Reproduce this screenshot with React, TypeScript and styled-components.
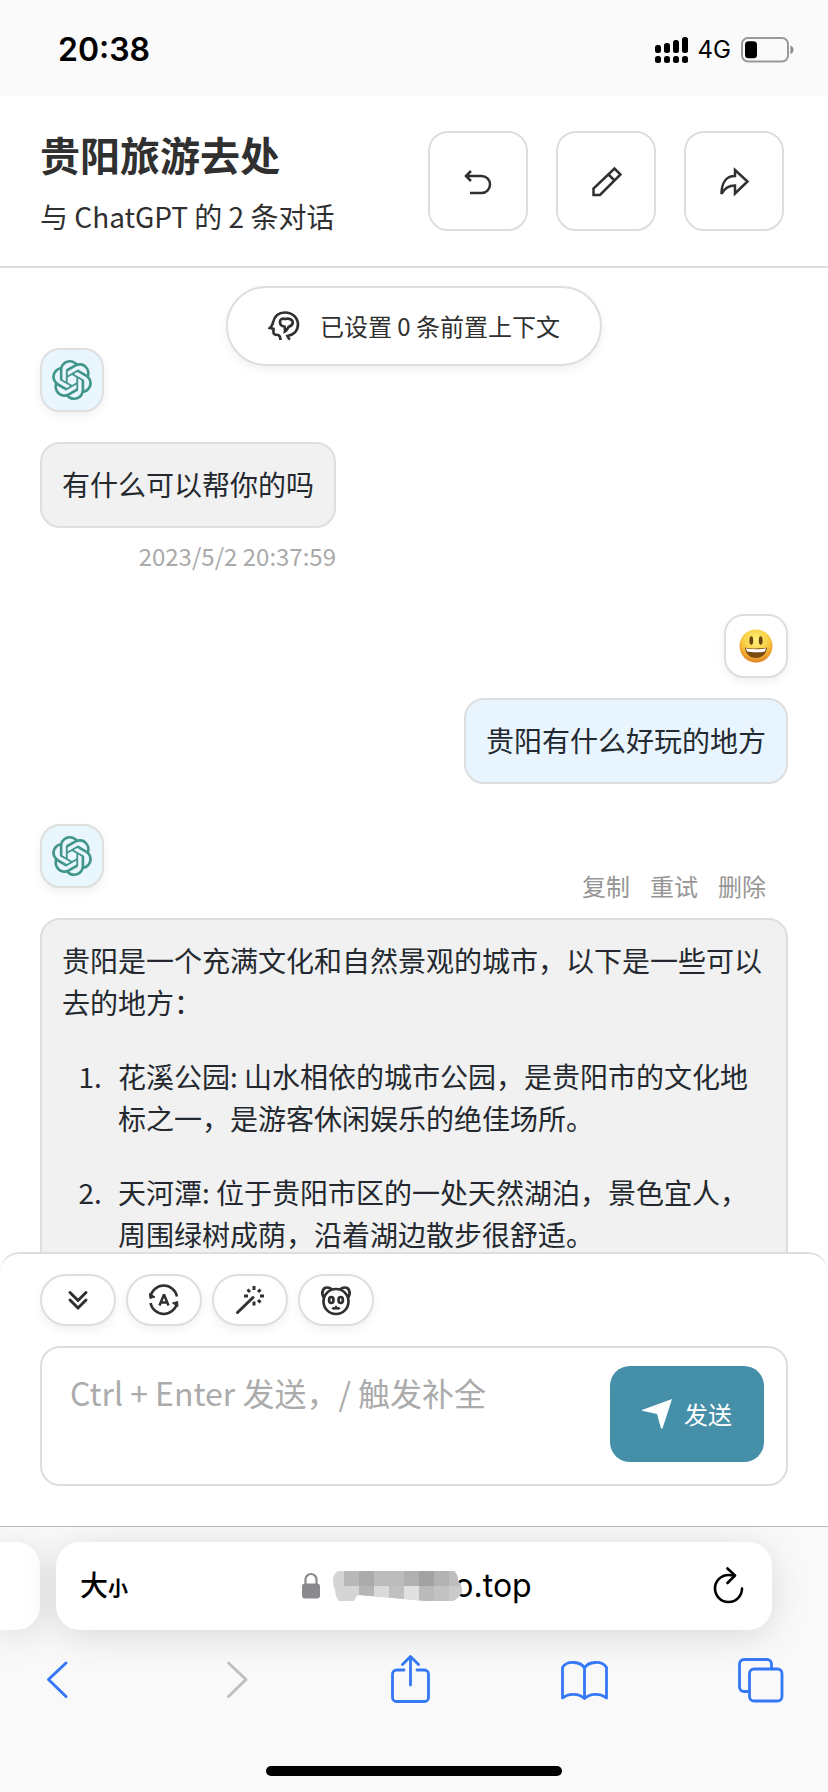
import React from "react";
import styled, { createGlobalStyle } from "styled-components";
import { SiOpenai } from "react-icons/si";

const line = "#dedede";
const ink = "#303030";
const blue = "#3478f6";
const softShadow = "0 4px 10px rgba(0, 0, 0, 0.06)";

const GlobalStyle = createGlobalStyle`
  * { box-sizing: border-box; }
  body {
    margin: 0;
    background: #fff;
    color: ${ink};
    font-family: "Noto Sans CJK SC", sans-serif;
    -webkit-font-smoothing: antialiased;
  }
  button, textarea { font-family: inherit; color: inherit; }
  button { padding: 0; border: 0; background: none; cursor: pointer; }
  svg { display: block; flex: none; }
`;

const Screen = styled.div`
  display: flex;
  flex-direction: column;
  height: 100vh;
  overflow: hidden;
`;

const StatusBar = styled.div`
  flex: none;
  display: flex;
  align-items: center;
  justify-content: space-between;
  height: 96px;
  padding: 4px 34px 0 58px;
  background: #fafafa;
  color: #000;
  font-family: Inter, sans-serif;
`;

const Clock = styled.time`
  font-size: 32px;
  line-height: 40px;
  font-weight: 600;
`;

const StatusIcons = styled.div`
  display: flex;
  align-items: center;
  gap: 10px;
  font-size: 24px;
  line-height: 28px;
`;

const Header = styled.header`
  flex: none;
  display: flex;
  align-items: center;
  justify-content: space-between;
  padding: 29px 44px 29px 40px;
  border-bottom: 2px solid ${line};
`;

const Titles = styled.div`
  display: flex;
  flex-direction: column;
  gap: 16px;
  padding-top: 4px;
`;

const Title = styled.h1`
  margin: 0;
  font-size: 40px;
  line-height: 50px;
  font-weight: 700;
`;

const Subtitle = styled.p`
  margin: 0;
  font-size: 28px;
  line-height: 42px;
`;

const HeaderActions = styled.div`
  display: flex;
  gap: 28px;
`;

const HeaderButton = styled.button`
  display: flex;
  align-items: center;
  justify-content: center;
  width: 100px;
  height: 100px;
  border: 2px solid ${line};
  border-radius: 20px;
`;

const Chat = styled.main`
  position: relative;
  flex: 1;
  min-height: 0;
  display: flex;
  flex-direction: column;
`;

const Messages = styled.div`
  flex: 1;
  min-height: 0;
  overflow: hidden auto;
  scrollbar-width: none;
  display: flex;
  flex-direction: column;
  gap: 40px;
  padding: 80px 40px 0;
`;

const ContextPill = styled.button`
  position: absolute;
  top: 18px;
  left: 50%;
  transform: translateX(-50%);
  display: flex;
  align-items: center;
  gap: 20px;
  height: 80px;
  padding: 0 40px;
  border: 2px solid ${line};
  border-radius: 40px;
  background: #fff;
  box-shadow: ${softShadow};
  font-size: 24px;
  line-height: 36px;
  white-space: nowrap;
`;

const Message = styled.article<{ $user?: boolean }>`
  flex: none;
  display: flex;
  flex-direction: column;
  align-items: ${(p) => (p.$user ? "flex-end" : "flex-start")};
`;

const MessageTop = styled.div<{ $user?: boolean }>`
  display: flex;
  justify-content: space-between;
  align-self: stretch;
  flex-direction: ${(p) => (p.$user ? "row-reverse" : "row")};
  height: ${(p) => (p.$user ? 84 : 94)}px;
`;

const Avatar = styled.div<{ $user?: boolean }>`
  display: flex;
  align-items: center;
  justify-content: center;
  width: 64px;
  height: 64px;
  border: 2px solid ${line};
  border-radius: 20px;
  background: ${(p) => (p.$user ? "#fff" : "#e9f6fe")};
  color: #41958a;
  box-shadow: ${softShadow};
`;

const MessageActions = styled.div`
  align-self: flex-end;
  display: flex;
  gap: 20px;
  padding: 0 22px 14px;
`;

const TextButton = styled.button`
  color: #969696;
  font-size: 24px;
  line-height: 36px;
`;

const BubbleColumn = styled.div`
  display: flex;
  flex-direction: column;
  align-items: flex-end;
  gap: 10px;
`;

const Bubble = styled.div<{ $user?: boolean }>`
  padding: 19px 20px 21px;
  border: 2px solid ${line};
  border-radius: 20px;
  background: ${(p) => (p.$user ? "#e8f5fe" : "#f1f1f2")};
  color: #24292f;
  font-size: 28px;
  line-height: 42px;

  p { margin: 0; }
  ol { margin: 32px 0 0; padding-left: 46px; }
  li { padding-left: 10px; }
  li + li { margin-top: 32px; }
`;

const Stamp = styled.time`
  color: #aaa;
  font-size: 24px;
  line-height: 36px;
`;

const Composer = styled.section`
  flex: none;
  display: flex;
  flex-direction: column;
  gap: 20px;
  padding: 20px 40px 40px;
  border-top: 2px solid ${line};
  border-radius: 20px 20px 0 0;
  background: #fff;
`;

const Tools = styled.div`
  display: flex;
  gap: 10px;
`;

const ToolButton = styled.button`
  display: flex;
  align-items: center;
  justify-content: center;
  width: 76px;
  height: 52px;
  border: 2px solid ${line};
  border-radius: 26px;
  box-shadow: ${softShadow};
`;

const InputBox = styled.form`
  display: flex;
  align-items: flex-start;
  height: 140px;
  padding: 18px 22px 0 28px;
  border: 2px solid ${line};
  border-radius: 20px;
`;

const Input = styled.textarea`
  flex: 1;
  min-width: 0;
  height: 96px;
  padding: 2px 0;
  border: 0;
  outline: 0;
  resize: none;
  background: none;
  font-size: 32px;
  line-height: 48px;

  &::placeholder { color: #ababab; opacity: 1; }
`;

const SendButton = styled.button`
  display: flex;
  align-items: center;
  gap: 12px;
  height: 96px;
  padding: 0 32px;
  border-radius: 20px;
  background: #4590a8;
  color: #fff;
  font-size: 24px;
  line-height: 36px;
`;

const Browser = styled.footer`
  flex: none;
  overflow: hidden;
  padding: 15px 0 16px;
  border-top: 1px solid #b9b9b9;
  background: #f9f9f9;
`;

const AddressRow = styled.div`
  display: flex;
  gap: 16px;
  padding-right: 56px;
`;

const AddressCard = styled.div`
  flex: 1;
  display: grid;
  grid-template-columns: 1fr auto 1fr;
  align-items: center;
  height: 88px;
  padding: 0 28px 0 24px;
  border-radius: 24px;
  background: #fff;
  box-shadow: 0 6px 36px rgba(0, 0, 0, 0.13);
  color: #000;
`;

const PreviousTab = styled.div`
  width: 40px;
  height: 88px;
  border-radius: 0 24px 24px 0;
  background: #fff;
  box-shadow: 0 6px 36px rgba(0, 0, 0, 0.13);
`;

const SizeButton = styled.button`
  justify-self: start;
  font-size: 28px;
  line-height: 40px;
  font-weight: 500;

  small { font-size: 20px; font-weight: 700; }
`;

const Address = styled.button`
  display: flex;
  align-items: center;
  padding-left: 10px;
  font-family: Inter, sans-serif;
  font-size: 32px;
  line-height: 40px;
`;

const Mosaic = styled.svg`
  position: relative;
  z-index: 1;
  margin: 0 -8px 0 13px;
`;

const ReloadButton = styled.button`
  justify-self: end;
`;

const NavBar = styled.nav`
  display: flex;
  align-items: center;
  justify-content: space-between;
  height: 98px;
  padding: 0 44px 0 33px;
  color: ${blue};

  button:disabled { color: #bfbfbf; }
`;

const HomeIndicator = styled.div`
  width: 296px;
  height: 10px;
  margin: 38px auto 0;
  border-radius: 5px;
  background: #000;
`;

type IconProps = { size?: number; width?: number; children: React.ReactNode };

const Icon = ({ size = 32, width = 2.5, children }: IconProps) => (
  <svg
    width={size}
    height={size}
    viewBox={`0 0 ${size} ${size}`}
    fill="none"
    stroke="currentColor"
    strokeWidth={width}
    aria-hidden="true"
  >
    {children}
  </svg>
);

const SignalIcon = () => (
  <svg width="33" height="26" viewBox="0 0 33 26" aria-hidden="true">
    {[8, 6, 3, 0].map((y, i) => (
      <React.Fragment key={y}>
        <rect x={i * 9} y={y} width="6" height={16 - y} rx="2.5" />
        <rect x={i * 9} y="19" width="6" height="7" rx="2.5" />
      </React.Fragment>
    ))}
  </svg>
);

const BatteryIcon = () => (
  <svg width="53" height="26" viewBox="0 0 53 26" aria-hidden="true">
    <rect x="1" y="1" width="46" height="23.5" rx="6" fill="none" stroke="#999" strokeWidth="2" />
    <path d="M49.5 8.5c2 .8 3 2.3 3 4.2s-1 3.4-3 4.2z" fill="#888" />
    <rect x="4" y="4.2" width="12" height="17" rx="3.5" />
  </svg>
);

const SmileIcon = () => (
  <svg width="34" height="34" viewBox="0 0 34 34" aria-hidden="true">
    <defs>
      <radialGradient id="face" cx="50%" cy="32%" r="68%">
        <stop offset="0" stopColor="#fff27a" />
        <stop offset="0.6" stopColor="#f8ca40" />
        <stop offset="1" stopColor="#e08020" />
      </radialGradient>
    </defs>
    <circle cx="17" cy="17" r="16.5" fill="url(#face)" />
    <ellipse cx="12.3" cy="11.5" rx="1.9" ry="4.3" fill="#6b4410" />
    <ellipse cx="21.7" cy="11.5" rx="1.9" ry="4.3" fill="#6b4410" />
    <path d="M6 18.5c3.5 1.3 18.5 1.3 22 0 0 5.5-4.5 10.5-11 10.5S6 24 6 18.5z" fill="#7a4a10" />
    <path d="M7 19.3c4 1.2 16 1.2 20 0-.2 1.5-.6 2.4-1.2 3.2-4 1-13.600 1-17.600 0-.6-.8-1-1.700-1.200-3.200z" fill="#fff" />
  </svg>
);

const mosaicCells: Array<[number, number, number, number, string]> = [
  [11, 0, 15, 15, "#b8b8b8"],
  [26, 0, 15, 15, "#ababab"],
  [41, 0, 30, 15, "#bcbcbc"],
  [71, 0, 15, 15, "#b0b0b0"],
  [86, 0, 15, 15, "#a2a2a2"],
  [101, 0, 15, 15, "#b2b2b2"],
  [116, 0, 13, 15, "#bebebe"],
  [26, 15, 15, 15, "#b5b5b5"],
  [41, 15, 15, 15, "#dadada"],
  [56, 15, 15, 15, "#c0c0c0"],
  [71, 15, 15, 15, "#e0e0e0"],
  [86, 15, 15, 15, "#bababa"],
  [101, 15, 15, 15, "#c2c2c2"],
  [116, 15, 13, 15, "#cacaca"],
];

const MosaicBlock = () => (
  <Mosaic width="129" height="30" viewBox="0 0 129 30" aria-hidden="true">
    <defs>
      <clipPath id="smudge">
        <path d="M5 0H121Q125 3 125 10Q129 14 129 20Q127 27 120 30H92L71 28L26 24Q23 25 21 30H6Q2 26 2 18Q0 16 0 8Q1 2 5 0Z" />
      </clipPath>
    </defs>
    <g clipPath="url(#smudge)">
      <rect width="129" height="30" fill="#d5d5d5" />
      {mosaicCells.map(([x, y, w, h, fill]) => (
        <rect key={`${x}-${y}`} x={x} y={y} width={w} height={h} fill={fill} />
      ))}
    </g>
  </Mosaic>
);

const places = [
  "花溪公园: 山水相依的城市公园，是贵阳市的文化地标之一，是游客休闲娱乐的绝佳场所。",
  "天河潭: 位于贵阳市区的一处天然湖泊，景色宜人，周围绿树成荫，沿着湖边散步很舒适。",
];

export default function App() {
  return (
    <Screen>
      <GlobalStyle />
      <StatusBar>
        <Clock>20:38</Clock>
        <StatusIcons>
          <SignalIcon />
          <span>4G</span>
          <BatteryIcon />
        </StatusIcons>
      </StatusBar>

      <Header>
        <Titles>
          <Title>贵阳旅游去处</Title>
          <Subtitle>与 ChatGPT 的 2 条对话</Subtitle>
        </Titles>
        <HeaderActions>
          <HeaderButton aria-label="返回">
            <Icon>
              <path d="M9 6L4 11l5 5M4 11h15.5a8.5 8.5 0 0 1 0 17H8" />
            </Icon>
          </HeaderButton>
          <HeaderButton aria-label="编辑">
            <Icon>
              <path d="M3.5 30v-6.5L24.5 3.5l6 6L10 30zM18.5 9.5l6 6" />
            </Icon>
          </HeaderButton>
          <HeaderButton aria-label="分享">
            <Icon>
              <path d="M17 5l12.5 11.5L17 28.5v-8C11 20.5 6.5 23 3.5 29 3.5 18 8 11 17 11z" />
            </Icon>
          </HeaderButton>
        </HeaderActions>
      </Header>

      <Chat>
        <Messages>
          <Message>
            <MessageTop>
              <Avatar><SiOpenai size={40} /></Avatar>
            </MessageTop>
            <BubbleColumn>
              <Bubble>有什么可以帮你的吗</Bubble>
              <Stamp>2023/5/2 20:37:59</Stamp>
            </BubbleColumn>
          </Message>

          <Message $user>
            <MessageTop $user>
              <Avatar $user><SmileIcon /></Avatar>
            </MessageTop>
            <Bubble $user>贵阳有什么好玩的地方</Bubble>
          </Message>

          <Message>
            <MessageTop>
              <Avatar><SiOpenai size={40} /></Avatar>
              <MessageActions>
                <TextButton>复制</TextButton>
                <TextButton>重试</TextButton>
                <TextButton>删除</TextButton>
              </MessageActions>
            </MessageTop>
            <Bubble>
              <p>贵阳是一个充满文化和自然景观的城市，以下是一些可以去的地方：</p>
              <ol>
                {places.map((text) => <li key={text}>{text}</li>)}
              </ol>
            </Bubble>
          </Message>
        </Messages>

        <ContextPill>
          <Icon width={2.7}>
            <path d="M12.5 30c0-3-.5-4.5-2.5-5-3.500 0-4.500-.7-4.500-3v-3.200l-3.500-.8C4.500 16 4.500 15 5 12.500 6.500 6 11 2.500 17 2.500c7.500 0 13 5.500 13 12 0 6.500-4.500 10.500-10.500 11.500.5 1 1 2.500 2.500 3.500" />
            <path d="M12 11.500c.3-2.500 2.500-3.500 5-2.500 4-1 8 .5 7.800 4-.3 2.500-2.300 3-4.300 4-1 2-1.500 3.500-3.500 4.500.3-2 .3-3-.5-5C13.500 16.500 11.800 14.500 12 11.500z" />
          </Icon>
          已设置 0 条前置上下文
        </ContextPill>
      </Chat>

      <Composer>
        <Tools>
          <ToolButton aria-label="滚到最新">
            <Icon width={3}>
              <path d="M8 8.5l8 8 8-8M8 16l8 8 8-8" strokeLinecap="round" />
            </Icon>
          </ToolButton>
          <ToolButton aria-label="自动主题">
            <Icon width={2.5}>
              <path d="M2.5 12.5a13.5 13.5 0 0 1 26.5 0M2.5 19a13.5 13.5 0 0 0 26.5 0" />
              <path d="M1.5 9.500l.5 5 5-1.500zM30 22.500l-.5-5-5 1.500z" fill="currentColor" strokeWidth="1" />
              <path d="M11.500 21.500L16 10.500l4.500 11M13 18.500h6" strokeLinejoin="bevel" />
            </Icon>
          </ToolButton>
          <ToolButton aria-label="快捷指令">
            <Icon width={3}>
              <path d="M3.5 28.5L19 13.5" strokeLinecap="round" />
              <path d="M20 2v4M20 17.5v4M10 12h4M26 12h4M13.5 5.5l2.5 2.5M26.5 5.5L24 8M26.5 18.5L24 16" />
            </Icon>
          </ToolButton>
          <ToolButton aria-label="所有面具">
            <Icon width={2.7}>
              <circle cx="16" cy="17.5" r="12.5" />
              <path d="M3.8 13.5C1 9.5 2.5 3.5 7 3.5c2.5 0 4.3 1.2 5 2.5M28.2 13.5C31 9.5 29.5 3.5 25 3.5c-2.500 0-4.300 1.200-5 2.500" />
              <ellipse cx="11.3" cy="16" rx="2.2" ry="3" />
              <ellipse cx="20.7" cy="16" rx="2.2" ry="3" />
              <path d="M12.5 23.5c.8 1.2 2.7 1.2 3.5 0 .8 1.2 2.7 1.2 3.5 0" />
            </Icon>
          </ToolButton>
        </Tools>
        <InputBox onSubmit={(e) => e.preventDefault()}>
          <Input aria-label="消息" placeholder="Ctrl + Enter 发送，/ 触发补全" />
          <SendButton type="submit">
            <svg width="30" height="30" viewBox="0 0 30 30" fill="currentColor" aria-hidden="true">
              <path d="M30 0L20.5 29.5H19L15 15 0 11.8V11z" />
            </svg>
            发送
          </SendButton>
        </InputBox>
      </Composer>

      <Browser>
        <AddressRow>
          <PreviousTab />
          <AddressCard>
            <SizeButton>大<small>小</small></SizeButton>
            <Address>
              <svg width="18" height="28" viewBox="0 0 18 28" aria-hidden="true">
                <path d="M3.5 13V7.5a5.5 5.5 0 0 1 11 0V13" fill="none" stroke="#8a8a8e" strokeWidth="2.2" />
                <rect y="11.5" width="18" height="15" rx="3" fill="#8a8a8e" />
              </svg>
              <MosaicBlock />
              <span>o.top</span>
            </Address>
            <ReloadButton aria-label="重新加载">
              <svg width="32" height="38" viewBox="0 0 32 38" fill="none" stroke="#000" strokeWidth="2.6" strokeLinecap="round" strokeLinejoin="round" aria-hidden="true">
                <path d="M30 21.5A13.5 13.5 0 1 1 16.5 8q3 0 5.5 .5" />
                <path d="M15.5 1.5l7.5 7-7.5 7.5" />
              </svg>
            </ReloadButton>
          </AddressCard>
        </AddressRow>
        <NavBar aria-label="浏览器">
          <button aria-label="后退">
            <Icon size={48} width={3}><path d="M33 8L15.5 24.5l17.5 17" strokeLinecap="round" strokeLinejoin="round" /></Icon>
          </button>
          <button aria-label="前进" disabled>
            <Icon size={48} width={3}><path d="M19.5 8L37 24.5l-17.5 17" strokeLinecap="round" strokeLinejoin="round" /></Icon>
          </button>
          <button aria-label="共享">
            <Icon size={48} width={2.8}>
              <path d="M19 15h-7.5a4 4 0 0 0-4 4v23.5a4 4 0 0 0 4 4h28a4 4 0 0 0 4-4V19a4 4 0 0 0-4-4H32M25.5 30V2M17.5 9.5l8-8 8 8" strokeLinecap="round" strokeLinejoin="round" />
            </Icon>
          </button>
          <button aria-label="书签">
            <Icon size={48} width={2.8}>
              <path d="M24.5 13C21 6.5 7 5 2.5 12.5V43c6-5 16.5-5 22 .5 5.5-5.5 16-5.5 22-.5V12.5C42 5 28 6.5 24.5 13zM24.5 13v30.5" strokeLinejoin="round" />
            </Icon>
          </button>
          <button aria-label="标签页">
            <Icon size={48} width={2.8}>
              <rect x="13.5" y="14" width="32.5" height="32" rx="4.5" />
              <path d="M13.5 36.5H8a4.5 4.5 0 0 1-4.5-4.5V9A4.5 4.5 0 0 1 8 4.5h23a4.5 4.5 0 0 1 4.5 4.5v5" />
            </Icon>
          </button>
        </NavBar>
        <HomeIndicator />
      </Browser>
    </Screen>
  );
}
